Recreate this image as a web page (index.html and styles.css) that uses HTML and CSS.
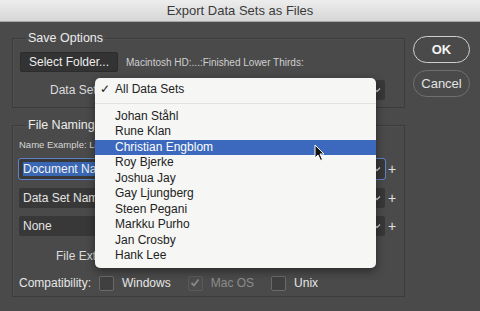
FILE: index.html
```html
<!DOCTYPE html>
<html lang="en">
<head>
    <meta charset="UTF-8">
    <title>Export Data Sets as Files</title>
    <link rel="stylesheet" href="styles.css">
</head>
<body>
    <div class="titlebar">Export Data Sets as Files</div>
    <div class="dialog">
        <div class="main">
            <fieldset class="group save">
                <legend>Save Options</legend>
                <div class="row folder-row">
                    <button class="btn-folder">Select Folder...</button>
                    <span class="path">Macintosh HD:...:Finished Lower Thirds:</span>
                </div>
                <div class="row field-row">
                    <span class="label set-label">Data Set:</span>
                    <div class="select grow set-select">All Data Sets
                        <svg class="chev" width="8" height="6" viewBox="0 0 8 6"><polyline points="1,1.5 4,4.5 7,1.5" fill="none" stroke="#c8c8c8" stroke-width="1.4"/></svg>
                    </div>
                </div>
            </fieldset>
            <fieldset class="group naming">
                <legend>File Naming</legend>
                <div class="example">Name Example: Lower Thirds_Johan Ståhl.psd</div>
                <div class="name-rows">
                    <div class="name-row">
                        <div class="select grow focused"><span class="sel-text">Document Name</span>
                            <svg class="chev" width="8" height="6" viewBox="0 0 8 6"><polyline points="1,1.5 4,4.5 7,1.5" fill="none" stroke="#c8c8c8" stroke-width="1.4"/></svg>
                        </div>
                        <span class="plus">+</span>
                    </div>
                    <div class="name-row">
                        <div class="select grow">Data Set Name
                            <svg class="chev" width="8" height="6" viewBox="0 0 8 6"><polyline points="1,1.5 4,4.5 7,1.5" fill="none" stroke="#c8c8c8" stroke-width="1.4"/></svg>
                        </div>
                        <span class="plus">+</span>
                    </div>
                    <div class="name-row">
                        <div class="select grow">None
                            <svg class="chev" width="8" height="6" viewBox="0 0 8 6"><polyline points="1,1.5 4,4.5 7,1.5" fill="none" stroke="#c8c8c8" stroke-width="1.4"/></svg>
                        </div>
                        <span class="plus">+</span>
                    </div>
                </div>
                <div class="row field-row ext-row">
                    <span class="label ext-label">File Extension:</span>
                    <div class="select ext">.psd</div>
                </div>
                <div class="compat">
                    <span class="compat-label">Compatibility:</span>
                    <span class="check"></span><span class="opt">Windows</span>
                    <span class="check checked">
                        <svg width="10" height="10" viewBox="0 0 10 10"><polyline points="1.5,5 4,7.5 8.5,1.5" fill="none" stroke="#8a8a8a" stroke-width="1.8"/></svg>
                    </span><span class="opt disabled">Mac OS</span>
                    <span class="check"></span><span class="opt">Unix</span>
                </div>
            </fieldset>
        </div>
        <div class="buttons">
            <button class="pill ok">OK</button>
            <button class="pill cancel">Cancel</button>
        </div>

        <div class="menu">
            <div class="menu-item"><span class="tick">✓</span>All Data Sets</div>
            <div class="menu-sep"></div>
            <div class="menu-item">Johan Ståhl</div>
            <div class="menu-item">Rune Klan</div>
            <div class="menu-item active">Christian Engblom</div>
            <div class="menu-item">Roy Bjerke</div>
            <div class="menu-item">Joshua Jay</div>
            <div class="menu-item">Gay Ljungberg</div>
            <div class="menu-item">Steen Pegani</div>
            <div class="menu-item">Markku Purho</div>
            <div class="menu-item">Jan Crosby</div>
            <div class="menu-item">Hank Lee</div>
        </div>
        <svg class="cursor" width="12" height="18" viewBox="0 0 12 18">
            <path d="M1 1 L1 14 L4 11 L6.5 16.5 L8.5 15.5 L6 10 L10 10 Z" fill="#111" stroke="#fff" stroke-width="1"/>
        </svg>
    </div>
</body>
</html>
```

FILE: styles.css
```css
body {
    margin: 0;
    width: 480px;
    height: 311px;
    overflow: hidden;
    background: #4a4a4a;
    font-family: "Liberation Sans", Arial, sans-serif;
    font-size: 12px;
    color: #e4e4e4;
}
.titlebar {
    height: 21px;
    line-height: 22px;
    text-align: center;
    font-size: 13px;
    color: #3a3a3a;
    background: linear-gradient(#ededed, #d6d6d6);
    border-bottom: 1px solid #a8a8a8;
}
.dialog {
    position: relative;
    display: flex;
    padding-left: 12px;
}
.main {
    width: 393px;
    padding-top: 9px;
}
.group {
    margin: 0;
    border: 1px solid #3c3c3c;
    box-shadow: inset 1px 1px 0 #505050;
    padding: 0 6px;
}
.group legend {
    margin-left: 7px;
    padding: 0 2px;
    height: 15px;
    line-height: 15px;
    font-size: 12.5px;
    color: #ececec;
}
.save {
    padding-top: 6px;
    padding-bottom: 7px;
}
.row {
    display: flex;
    align-items: center;
}
.folder-row {
    padding-left: 1px;
}
.btn-folder {
    height: 20px;
    width: 98px;
    padding: 0;
    background: #333;
    border: 1px solid #2c2c2c;
    border-radius: 2px;
    color: #ececec;
    font-family: inherit;
    font-size: 12px;
}
.path {
    margin-left: 8px;
    font-size: 10px;
    color: #d0d0d0;
}
.field-row {
    margin-top: 8px;
}
.label {
    flex: none;
    white-space: nowrap;
    color: #dcdcdc;
}
.set-label {
    margin-left: 31px;
    margin-right: 8px;
}
.set-select {
    margin-right: 13px;
}
.ext-label {
    margin-left: 37px;
    margin-right: 6px;
}
.select {
    position: relative;
    height: 20px;
    line-height: 20px;
    padding-left: 4px;
    background: #383838;
    border-radius: 2px;
    color: #e4e4e4;
    box-sizing: border-box;
}
.grow {
    flex: 1;
}
.chev {
    position: absolute;
    right: 4px;
    top: 7px;
}
.naming {
    margin-top: 10px;
    padding-bottom: 4px;
}
.example {
    margin-top: 6px;
    height: 12px;
    line-height: 12px;
    font-size: 9.5px;
    color: #d6d6d6;
    white-space: nowrap;
}
.name-rows {
    display: flex;
    flex-direction: column;
    gap: 8.5px;
    margin-top: 8px;
}
.name-row {
    display: flex;
    align-items: center;
}
.name-row .select {
    flex: none;
    width: 366px;
}
.focused {
    outline: 1px solid #5d83c4;
}
.sel-text {
    background: #3967b4;
    color: #f2f2f2;
}
.plus {
    margin-left: 3px;
    font-size: 14px;
    color: #e0e0e0;
}
.ext-row {
    margin-top: 10px;
}
.ext {
    width: 80px;
}
.compat {
    display: flex;
    align-items: center;
    height: 18px;
    margin-top: 8px;
    color: #e6e6e6;
}
.compat-label {
    margin-right: 8px;
}
.check {
    display: inline-flex;
    align-items: center;
    justify-content: center;
    width: 13px;
    height: 13px;
    border: 1px solid #6a6a6a;
    border-radius: 2px;
    background: #404040;
    margin-right: 8px;
}
.check.checked {
    border-color: #5a5a5a;
    background: #4c4c4c;
}
.opt {
    margin-right: 17px;
}
.opt.disabled {
    color: #8c8c8c;
}
.buttons {
    display: flex;
    flex-direction: column;
    gap: 7px;
    padding-top: 14px;
    margin-left: 8px;
}
.pill {
    width: 57px;
    height: 27px;
    padding: 0;
    border-radius: 14px;
    background: transparent;
    font-family: inherit;
    font-size: 13px;
}
.ok {
    border: 1.5px solid #cfcfcf;
    color: #f4f4f4;
    font-weight: bold;
}
.cancel {
    border: 1.5px solid #707070;
    color: #e2e2e2;
}
.menu {
    position: absolute;
    left: 95px;
    top: 56px;
    width: 281px;
    padding: 4px 0;
    background: #f6f6f4;
    border-radius: 5px;
    box-shadow: 0 3px 10px rgba(0, 0, 0, 0.45);
    color: #222;
    font-size: 12px;
}
.menu-item {
    height: 15.5px;
    line-height: 15.5px;
    padding-left: 20px;
    position: relative;
}
.menu-item.active {
    background: #3c69bd;
    color: #fff;
}
.tick {
    position: absolute;
    left: 5px;
}
.menu-sep {
    height: 1px;
    margin: 5px 0;
    background: #e2e2e0;
}
.cursor {
    position: absolute;
    left: 314px;
    top: 122px;
}
```
